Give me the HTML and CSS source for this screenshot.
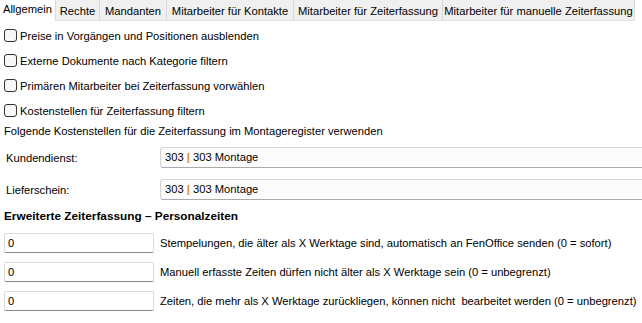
FILE: index.html
```html
<!DOCTYPE html>
<html lang="de">
<head>
    <meta charset="UTF-8">
    <title>Einstellungen</title>
    <link rel="stylesheet" href="styles.css">
</head>
<body>
    <div class="tabs">
        <div class="tab active w-allg">Allgemein</div>
        <div class="tab w-rechte">Rechte</div>
        <div class="tab w-mand">Mandanten</div>
        <div class="tab w-kont">Mitarbeiter für Kontakte</div>
        <div class="tab w-zeit">Mitarbeiter für Zeiterfassung</div>
        <div class="tab w-man">Mitarbeiter für manuelle Zeiterfassung</div>
    </div>

    <div class="page">
        <label class="check-row"><span class="box"></span>Preise in Vorgängen und Positionen ausblenden</label>
        <label class="check-row"><span class="box"></span>Externe Dokumente nach Kategorie filtern</label>
        <label class="check-row"><span class="box"></span>Primären Mitarbeiter bei Zeiterfassung vorwählen</label>
        <label class="check-row"><span class="box"></span>Kostenstellen für Zeiterfassung filtern</label>

        <div class="hint">Folgende Kostenstellen für die Zeiterfassung im Montageregister verwenden</div>

        <div class="combo-row first">
            <div class="combo-label">Kundendienst:</div>
            <div class="combo">303 <span class="sep">|</span> 303 Montage</div>
        </div>
        <div class="combo-row">
            <div class="combo-label">Lieferschein:</div>
            <div class="combo">303 <span class="sep">|</span> 303 Montage</div>
        </div>

        <h3 class="section-title">Erweiterte Zeiterfassung – Personalzeiten</h3>

        <div class="num-list">
            <div class="num-row">
                <div class="num">0</div>
                <div class="num-text">Stempelungen, die älter als X Werktage sind, automatisch an FenOffice senden (0 = sofort)</div>
            </div>
            <div class="num-row">
                <div class="num">0</div>
                <div class="num-text">Manuell erfasste Zeiten dürfen nicht älter als X Werktage sein (0 = unbegrenzt)</div>
            </div>
            <div class="num-row">
                <div class="num">0</div>
                <div class="num-text">Zeiten, die mehr als X Werktage zurückliegen, können nicht&nbsp; bearbeitet werden (0 = unbegrenzt)</div>
            </div>
        </div>
    </div>
</body>
</html>
```

FILE: styles.css
```css
body {
    margin: 0;
    background: #ffffff;
    font-family: "Liberation Sans", Arial, sans-serif;
    font-size: 11.2px;
    color: #000;
    overflow: hidden;
}
.tabs {
    display: flex;
    height: 21px;
}
.tab {
    flex: none;
    background: #f0f0f0;
    border-right: 1px solid #d9d9d9;
    border-bottom: 1px solid #e3e3e3;
    padding-top: 5px;
    box-sizing: border-box;
    height: 21px;
    text-align: center;
    white-space: nowrap;
}
.tab.active {
    background: #ffffff;
    border-bottom: none;
    padding-top: 3px;
}
.w-allg { width: 56px; }
.w-rechte { width: 44px; }
.w-mand { width: 67px; }
.w-kont { width: 127px; }
.w-zeit { width: 149px; }
.w-man { width: 192px; }
.page {
    padding: 2px 0 0 4px;
}
.check-row {
    display: flex;
    align-items: center;
    height: 25px;
}
.box {
    flex: none;
    width: 13px;
    height: 13px;
    box-sizing: border-box;
    border: 1px solid #333;
    border-radius: 3px;
    background: #f7f7f7;
    margin-right: 3px;
}
.hint {
    line-height: 17px;
}
.combo-row {
    display: flex;
    align-items: center;
    margin-top: 11px;
}
.combo-row.first {
    margin-top: 7px;
}
.combo-label {
    flex: none;
    width: 156px;
    padding-left: 2px;
    box-sizing: border-box;
}
.combo {
    flex: 1;
    height: 21px;
    box-sizing: border-box;
    border: 1px solid #d4d4d4;
    border-bottom-color: #aaaaaa;
    border-right: none;
    border-radius: 3px 0 0 3px;
    background: #fcfcfc;
    padding: 3px 0 0 4px;
    margin-right: -4px;
}
.sep {
    color: #e08a1e;
    font-weight: bold;
}
.section-title {
    margin: 8px 0 0 0;
    font-size: 11.8px;
    line-height: 17px;
    font-weight: bold;
}
.num-list {
    display: flex;
    flex-direction: column;
    gap: 9px;
    margin-top: 8px;
}
.num-row {
    display: flex;
    align-items: center;
}
.num {
    flex: none;
    width: 150px;
    height: 20px;
    box-sizing: border-box;
    border: 1px solid #dcdcdc;
    border-bottom-color: #868686;
    border-radius: 2px;
    background: #fff;
    padding: 3px 0 0 3px;
}
.num-text {
    margin-left: 6px;
    white-space: nowrap;
}
```
